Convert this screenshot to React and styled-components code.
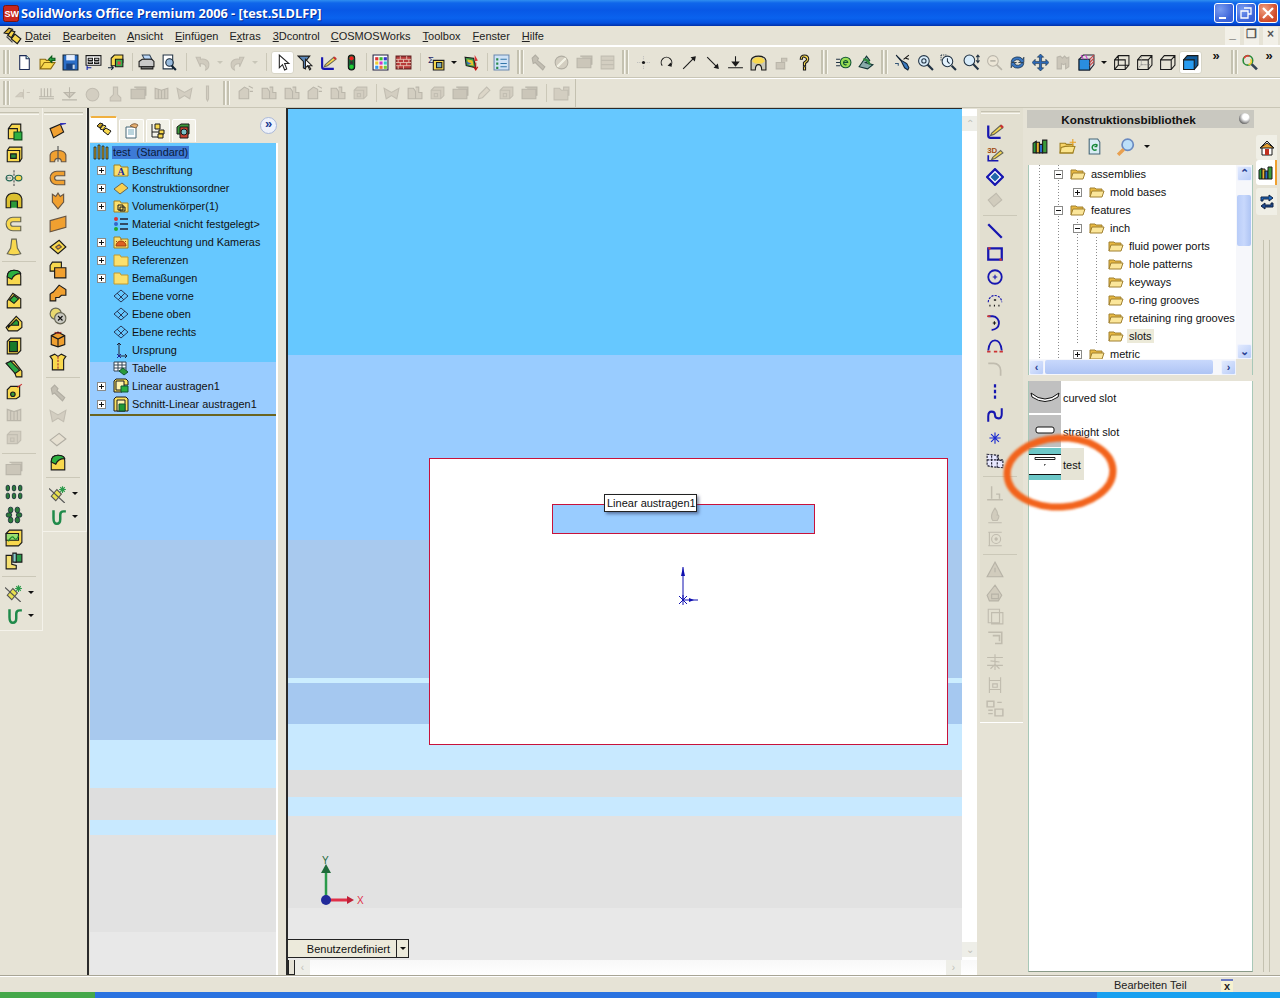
import React from 'react'
import styled, { createGlobalStyle } from 'styled-components'

const GlobalStyle = createGlobalStyle`
  html, body { margin: 0; padding: 0; background: #e6e3d6; }
  body { font-family: "Liberation Sans", Arial, sans-serif; font-size: 11px; color: #111; }
`

const BEIGE = '#e6e3d6'
const Y = '#f8d84e'
const O = '#f0a030'
const K = '#1a1a1a'
const B = '#1616b0'

const s = { stroke: K, strokeWidth: 1 }

/* 16x16 toolbar bitmaps redrawn by hand */
const icons = {
  logo: <g><path d="M1 5l4-4 3 1-3 4z" fill="#d8b030" {...s} /><path d="M4 7l3-4 3 1-3 5z" fill={Y} {...s} /><path d="M7 10l3-4 5 4-3 4z" fill={Y} {...s} /><path d="M3 8l5 5" stroke="#444" /></g>,
  new: <g><path d="M3.5 1.5h6l3 3v10h-9z" fill="#fff" stroke="#1c2a55" /><path d="M9.5 1.5v3h3" fill="#cfe" stroke="#1c2a55" /></g>,
  open: <g><path d="M1 14V5h5l1 1h5v2H5l-4 6h10l4-6H5" fill={Y} stroke="#8a6a10" /><path d="M9 5l3-3v2h3v2h-3v2z" fill="#2aa845" stroke="#0a5a1a" /></g>,
  save: <g><path d="M1 1h14v14H1z" fill="#2a6ec8" stroke="#123" /><path d="M4 1h8v5H4z" fill="#e8f0ff" /><path d="M4 9h8v6H4z" fill="#16407e" /><path d="M10 10h2v4h-2z" fill="#cde" /></g>,
  props: <g><path d="M1 1.5h14v9H1z" fill="#fff" {...s} /><path d="M3 4h4v2H3zM9 4h4v2H9zM3 7.5h4v1.500H3zM9 7.500h4v1.500H9z" fill="#fff" {...s} /><path d="M2 11v4M2 13h4" stroke="#12a" /></g>,
  cube3: <g><path d="M3 4l3-3h8v7l-3 3H3z" fill={Y} {...s} /><path d="M7 5h7v7H7z" fill="#3ab04a" {...s} /><path d="M9 7h3v3H9z" fill="#d44" /><path d="M0 13h5M3 11l2 2-2 2" stroke="#123" fill="none" /></g>,
  print: <g><path d="M4 1h7l2 4H6z" fill="#bcd8f8" stroke="#345" /><path d="M1 7l3-2h9l2 2v5H1z" fill="#c8c8c8" {...s} /><path d="M3 12h11v2H3z" fill="#888" {...s} /></g>,
  preview: <g><path d="M2 1h9v13H2z" fill="#fff" stroke="#234" /><circle cx="8" cy="8" r="3.500" fill="#9bd" stroke="#123" /><path d="M10 11l4 4" stroke="#123" strokeWidth="2" /></g>,
  undo: <g><path d="M2 3h4v2a6 5 0 0 1 8 5c0 2-1 4-3 5 1-3 0-6-5-6v3z" fill="#b0a860" stroke="#888" /></g>,
  redo: <g><path d="M14 3h-4v2a6 5 0 0 0-8 5c0 2 1 4 3 5-1-3 0-6 5-6v3z" fill="#b0a860" stroke="#888" /></g>,
  select: <path d="M5 1v12l3-3 2 5 2-1-2-5h4z" fill="#fff" stroke="#222" />,
  filter: <g><path d="M1 2h11L8 7v7l-2-1V7z" fill="#5a86b8" {...s} /><path d="M8 5v8l2-2 2 4 1-1-2-3h3z" fill="#fff" stroke="#222" /></g>,
  sketch: <g><path d="M2 3v9q0 2 2 2h9" fill="none" stroke={B} strokeWidth="2" /><path d="M5 10l8-7 2 2-8 6-3 1z" fill={Y} stroke="#665" /><path d="M13 3l2 2" stroke="#c33" strokeWidth="2" /></g>,
  sketch3d: <g><text x="1" y="7" fontSize="7" fontWeight="700" fontFamily="Liberation Sans" fill="#a04a10">3D</text><path d="M2 9v5h9" fill="none" stroke={B} strokeWidth="1.500" /><path d="M6 11l7-6 2 2-7 5-3 1z" fill={Y} stroke="#665" /></g>,
  light: <g><rect x="5" y="1" width="6" height="14" rx="3" fill="#163" stroke="#111" /><circle cx="8" cy="4" r="2" fill="#e22" /><circle cx="8" cy="8" r="1.500" fill="#333" /><circle cx="8" cy="12" r="2" fill="#2c3" /></g>,
  colors: <g><path d="M1 1h14v14H1z" fill="#fff" stroke="#224" /><path d="M3 3h3v3H3z" fill="#d33" /><path d="M7 3h3v3H7z" fill="#3b3" /><path d="M11 3h3v3h-3z" fill="#33c" /><path d="M3 7h3v3H3z" fill="#ec3" /><path d="M7 7h3v3H7z" fill="#c3c" /><path d="M11 7h3v3h-3z" fill="#3cc" /><path d="M3 11h3v3H3z" fill="#39e" /><path d="M7 11h3v3H7z" fill="#e73" /><path d="M11 11h3v3h-3z" fill="#7c3" /></g>,
  brick: <g><path d="M1 2h14v12H1z" fill="#b83a3a" stroke="#622" /><path d="M1 5h14M1 8h14M1 11h14M5 2v3M11 2v3M3 5v3M8 5v3M13 5v3M5 8v3M11 8v3M3 11v3M8 11v3" stroke="#e8c8b8" strokeWidth=".8" /></g>,
  sigma: <g><path d="M5 6h10v9H5z" fill={Y} {...s} /><path d="M8 8h5v5H8z" fill="#7ab" {...s} /><text x="0" y="8" fontSize="9" fill="#226" fontFamily="Liberation Sans">Σ</text></g>,
  rainbow: <g><path d="M2 3l8 1 2 9-9-2z" fill="#3a9a4a" {...s} /><path d="M4 5l5 1 1 5-5-1z" fill="#e8c030" /><path d="M11 1l3 5-3 1z" fill="#d33" /><path d="M3 7l5 2-3 1z" fill="#36c" /><path d="M12 8v6M10 12l2 3 2-3" stroke="#b11" fill="none" /></g>,
  list: <g><path d="M1 1h14v14H1z" fill="#cfe2f6" stroke="#6a8ab0" /><path d="M3 4h2v2H3zM3 8h2v2H3zM3 12h2v2H3z" fill="#2a8a4a" /><path d="M7 5h6M7 9h6M7 12h6" stroke="#37a" /></g>,
  wrench: <path d="M2 4l3-3 3 3-1 2 7 6-2 3-7-7-2 1z" fill="#888" stroke="#666" />,
  disc: <g><circle cx="8" cy="8" r="6" fill="#aaa" stroke="#666" /><path d="M4 12l8-8" stroke="#fff" strokeWidth="2" /></g>,
  stamp: <path d="M1 4h13v9H1zM4 2h11v8" fill="#999" stroke="#777" />,
  lines: <path d="M2 2h12v12H2zM2 6h12M2 10h12" fill="#aaa" stroke="#888" />,
  point: <g><circle cx="8" cy="8" r="1.500" fill={K} /><path d="M8 2v3M8 11v3M2 8h3M11 8h3" stroke="#bbb" strokeDasharray="1 1" /></g>,
  arcArrow: <g><path d="M4 11a5 5 0 1 1 8 0" fill="none" stroke={K} /><path d="M12 8l1 4-4-1z" fill={K} /></g>,
  arrowUp: <g><path d="M2 14L13 3" stroke={K} /><path d="M14 2l-1 5-4-4z" fill={K} /></g>,
  arrowDown: <g><path d="M3 3l10 10" stroke={K} /><path d="M14 14l-1-5-4 4z" fill={K} /></g>,
  ground: <g><path d="M8 2v9M1 13h14" stroke={K} /><path d="M4 7h8l-4 5z" fill={K} /></g>,
  dome: <g><path d="M1 15V6q1-4 7-4t7 4v9h-4q0-5-3-5t-3 5z" fill="#c8c8b8" {...s} /><path d="M2 7q1-4 6-4t6 4l-3 2H5z" fill={Y} /></g>,
  lock: <path d="M3 8h8v6H3zM8 8V4h5v3" fill="#999" stroke="#777" />,
  help: <g><path d="M4 5q0-4 4-4t4 4q0 2-3 4v2H7V8q3-2 3-3t-2-2-2 2z" fill={Y} {...s} /><path d="M7 12h2v3H7z" fill={Y} {...s} /></g>,
  eCircle: <g><path d="M1 5h4M1 8h4M1 11h4" stroke="#234" /><circle cx="10" cy="8" r="5" fill="#9d5" stroke="#153" /><path d="M8 8h4a2 2 0 1 0-1 2" stroke="#153" fill="none" /></g>,
  snake: <g><path d="M1 12L8 2l3 4-4 2 7 2-5 4z" fill="#8aa" stroke="#133" /><path d="M5 5q5 0 6 5" stroke="#2a8a3a" fill="none" strokeWidth="2" /></g>,
  tools: <g><path d="M2 1l5 6 3 6 3 2 1-2-2-4-5-3z" fill="#3a7ac0" stroke="#123" /><path d="M14 1L9 5M14 5l-3-1" stroke="#111" /><path d="M1 9h3v2" stroke="#357" fill="none" /></g>,
  zoomFit: <g><circle cx="6.500" cy="6.500" r="5" fill="#d8ecfa" stroke="#234" /><circle cx="6.500" cy="6.500" r="2" fill="none" stroke="#234" /><path d="M10 10l5 5" stroke="#234" strokeWidth="2" /></g>,
  zoomArea: <g><circle cx="7" cy="7" r="5" fill="#e4f2fc" stroke="#234" /><path d="M1 1h5M1 1v5" stroke="#234" strokeDasharray="1 1" /><path d="M7 4v3l2 2" stroke="#234" fill="none" /><path d="M11 11l4 4" stroke="#234" strokeWidth="2" /></g>,
  zoomUp: <g><circle cx="6" cy="6" r="5" fill="#d8ecfa" stroke="#234" /><path d="M9.500 9.500l5 5" stroke="#234" strokeWidth="2" /><path d="M14 1v7M12.500 3L14 1l1.500 2M12.500 6L14 8l1.500-2" stroke="#234" fill="none" /></g>,
  zoomSel: <g><circle cx="6.500" cy="6.500" r="5" fill="#ddd" stroke="#777" /><path d="M4 6.500h5M10 10l5 5" stroke="#777" strokeWidth="1.500" /></g>,
  rotate: <g><path d="M2 7a6 5 0 0 1 11-2l1-2v5h-5l2-1a4 4 0 0 0-7 1z" fill="#3a76c0" stroke="#123" strokeWidth=".6" /><path d="M14 9a6 5 0 0 1-11 2l-1 2V8h5l-2 1a4 4 0 0 0 7-1z" fill="#3a76c0" stroke="#123" strokeWidth=".6" /></g>,
  pan: <path d="M8 0l3 3H9v4h4V5l3 3-3 3V9H9v4h2l-3 3-3-3h2V9H3v2L0 8l3-3v2h4V3H5z" fill="#2a68b8" stroke="#123" strokeWidth=".5" />,
  camera: <path d="M2 14V3l3-1 2 2 2-2 2 2 2-1v9l-3 2V9l-2 1-2-1v5z" fill="#999" stroke="#777" />,
  viewCube: <g><path d="M1 5l4-4h10v9l-4 5H1z" fill="#ddd" stroke="#223" /><path d="M1 5h10v10H1z" fill="#2a8ee0" stroke="#123" /><path d="M11 5l4-4M11 8l4-4M11 11l4-4" stroke="#c44" /><path d="M3 1l2 4M7 1l2 4" stroke="#c4c" /></g>,
  wire: <path d="M1.500 5.500h10v9h-10zM1.500 5.500l3.500-4h10v9l-3.500 4M5 1.500v9h10M5 10.500l-3.500 4" fill="none" stroke={K} />,
  hidden: <g><path d="M1.500 5.500h10v9h-10zM1.500 5.500l3.500-4h10v9l-3.500 4M11.500 5.500l3.500-4" fill="none" stroke={K} /><path d="M5 3v7h8M5 10l-3 4" stroke="#888" strokeDasharray="1 1" fill="none" /></g>,
  hiddenRem: <path d="M1.500 5.500h10v9h-10zM1.500 5.500l3.500-4h10v9l-3.500 4M11.500 5.500l3.500-4" fill="none" stroke={K} />,
  shaded: <g><path d="M1.500 5.500l3.500-4h10v9l-3.500 4z" fill="#0f5a9a" {...s} /><path d="M1.500 5.500h10v9h-10z" fill="#2a9cf0" {...s} /></g>,
  search: <g><circle cx="6.500" cy="6" r="4.500" fill="none" stroke="#2a8a3a" strokeWidth="1.500" /><path d="M3 4a4 4 0 0 1 5-2" stroke="#e33" strokeWidth="1.500" fill="none" /><path d="M9 5a3 3 0 0 1-2 5" stroke="#ec3" strokeWidth="1.500" fill="none" /><path d="M10 9.500l5 5" stroke="#345" strokeWidth="2.500" /></g>,
  parallel: <g><path d="M1 11l4-4h2v4zM8 4v9M11 7h3" stroke="#999" fill="#aaa" /></g>,
  comb: <path d="M1 11h14M3 3v8M6 3v8M9 3v8M12 3v8M1 13h14" stroke="#777" fill="none" />,
  perp: <path d="M8 2v9M3 7h10l-5 5zM1 14h14" stroke="#777" fill="#aaa" />,
  blob: <circle cx="8" cy="9" r="6" fill="#aaa" stroke="#888" />,
  tall: <path d="M6 2h4v7l3 3v3H3v-3l3-3z" fill="#aaa" stroke="#888" />,
  ribs: <path d="M2 3l6 2 6-2v10H2zM5 4v9M8 5v8M11 4v9" fill="#aaa" stroke="#777" />,
  wings: <path d="M1 3l7 4 7-4-2 10-5-3-5 3z" fill="#aaa" stroke="#888" />,
  pin: <path d="M7 1h2v12l-1 2-1-2z" fill="#aaa" stroke="#888" />,
  planeA: <path d="M2 13V6l5-4 4 2v9zM11 1l4 2M12 6h3" fill="#aaa" stroke="#777" />,
  planeB: <path d="M2 13V3h5l2 3v7zM9 2h3v5h3v6H9" fill="#aaa" stroke="#777" />,
  pencil: <path d="M3 13l1-4 7-7 3 3-7 7z" fill="#bbb" stroke="#888" />,
  boxN: <path d="M2 13V5l3-3h9v8l-3 3zM2 5h9v8M5 8h3v3H5z" fill="#aaa" stroke="#888" />,
  folderOff: <path d="M1 14V3h5l2 2h6v9zM10 5V2h5v8" fill="#aaa" stroke="#888" />,
  boss: <g><path d="M3 5l3-4h8v8l-3 5H3z" fill={Y} {...s} /><path d="M3 5h8v9" fill="none" {...s} /><path d="M8 8h7v7H8z" fill="#2db040" stroke="#0a4a1a" /></g>,
  squareBox: <g><path d="M2 4l2-3h11v10l-2 3H2z" fill={Y} {...s} /><path d="M2 4h11v10" fill="none" {...s} /><path d="M5 7h5v4H5z" fill="#2a8a3a" {...s} /></g>,
  axis: <g><path d="M8 1v14M1 8h4" stroke="#555" strokeDasharray="2 1" /><ellipse cx="4" cy="8" rx="3" ry="2.500" fill="none" stroke="#265" /><ellipse cx="12" cy="8" rx="3" ry="2.500" fill={Y} stroke="#265" /></g>,
  arch: <g><path d="M1 14V6q1-5 7-5t7 5v8h-4V9H5v5z" fill="#dcc030" {...s} /><path d="M5 14V8h6v6" fill="#2a9a3a" {...s} /></g>,
  cee: <path d="M14 2H7a6 6 0 0 0 0 12h7v-4H7a2 2 0 0 1 0-4h7z" fill={Y} stroke="#665" />,
  bell: <path d="M6 1h4l1 8 3 5q-6 2-12 0l3-5z" fill={Y} stroke="#665" />,
  domeG: <g><path d="M2 15V8q0-6 6-6 6 0 6 5v8z" fill={Y} {...s} /><path d="M2 8q0-6 6-6 5 0 6 3-6 0-8 5z" fill="#2db040" {...s} /></g>,
  domeH: <g><path d="M2 15V9l5-7 7 5v8z" fill={Y} {...s} /><path d="M4 8l4-4 4 3-4 4z" fill="#2db040" {...s} /></g>,
  ribL: <g><path d="M1 12l9-10 5 5v5l-4 3H3z" fill={Y} {...s} /><path d="M3 12l7-7 2 2v3H3z" fill="#2a9a3a" {...s} /></g>,
  shell: <g><path d="M2 4l3-3h9v11l-3 3H2z" fill={Y} {...s} /><path d="M4 4h7v9H4z" fill="#1a7a2a" {...s} /></g>,
  chamfer: <g><path d="M5 1h3l7 9v5h-5z" fill={Y} {...s} /><path d="M1 3l4-2 8 8-4 3z" fill="#2aa845" {...s} /></g>,
  holeX: <g><path d="M2 6l3-3h8v9l-3 2H2z" fill={Y} {...s} /><circle cx="7" cy="10" r="2" fill="#3a9a3a" {...s} /><path d="M11 4l4-3" stroke="#c33" /></g>,
  pattern: <g fill="#2a7a3a" stroke="#123" strokeWidth=".7"><rect x="1" y="2" width="3" height="5" rx="1.500" /><rect x="6.500" y="2" width="3" height="5" rx="1.500" /><rect x="12" y="2" width="3" height="5" rx="1.500" /><rect x="1" y="9" width="3" height="5" rx="1.500" /><rect x="6.500" y="9" width="3" height="5" rx="1.500" /><rect x="12" y="9" width="3" height="5" rx="1.500" /></g>,
  circular: <g fill="#2a7a3a" stroke="#123" strokeWidth=".7"><rect x="3" y="1" width="4" height="5" rx="2" /><rect x="9" y="1" width="4" height="5" rx="2" /><rect x="1" y="6" width="5" height="4" rx="2" /><rect x="10" y="6" width="5" height="4" rx="2" /><rect x="3" y="10" width="4" height="5" rx="2" /><rect x="9" y="10" width="4" height="5" rx="2" /></g>,
  curveBox: <g><path d="M1 4l3-3h11v11l-3 3H1z" fill={Y} {...s} /><path d="M1 4h11v6H1z" fill="#9adf70" {...s} /><path d="M3 11q3-6 5-3t4-2" stroke="#1a8a2a" fill="none" /></g>,
  mirror: <g><path d="M1 3h5v8l4 1v3H1z" fill="#f5e070" {...s} /><path d="M9 2h6v7H9z" fill="#2a9a4a" {...s} /><path d="M7 1h3v8H7z" fill="#8cc" {...s} /></g>,
  refGeom: <g><path d="M2 10l5-6 4 4-5 6z" fill="#e8e050" stroke="#555" /><path d="M0 3l14 13" stroke="#555" /><path d="M12 1v6M9 4h6M10 2l4 4M14 2l-4 4" stroke="#2a9a4a" /></g>,
  curve: <path d="M4 2v7q0 5 3 5t3-4V6q0-3 3-3h2" fill="none" stroke="#1f8a4a" strokeWidth="2.200" />,
  sweepO: <g><path d="M1 5l9-4 3 7-9 5z" fill={O} {...s} /><path d="M10 1l5-1" stroke="#33b" strokeWidth="2" /></g>,
  archO: <g><path d="M1 14V8q1-4 7-4t7 4v6h-4q0-3-3-3t-3 3z" fill={O} stroke="#654" /><path d="M8 0v14" stroke="#555" /></g>,
  ceeO: <path d="M14 2H7a6 6 0 0 0 0 12h7v-4H7a2 2 0 0 1 0-4h7z" fill={O} stroke="#654" />,
  arrowO: <path d="M3 2l3 2 2-3 2 3 3-2v7l-5 6-5-6z" fill={O} stroke="#654" />,
  planeO: <path d="M1 5l14-4v10L1 15z" fill={O} stroke="#654" />,
  diaO: <g><path d="M1 8l8-6 6 6-7 6z" fill={Y} {...s} /><path d="M6 8l3-2 2 2-3 2z" fill={O} stroke="#654" /></g>,
  cubesO: <g><path d="M1 4l2-3h8v8H1z" fill={Y} {...s} /><path d="M5 6h10v9H5z" fill={O} {...s} /></g>,
  elbowO: <path d="M1 15V9q1-1 3-2l5-6 6 4v5h-4l-2 2H6v3z" fill={O} {...s} />,
  ballX: <g><circle cx="6" cy="6" r="5" fill="#e8d870" stroke="#665" /><circle cx="10" cy="10" r="5" fill="#c8c8c0" stroke="#665" /><path d="M8 8l4 4M12 8l-4 4" stroke="#111" /></g>,
  boxO: <g><path d="M2 5l6-3 6 3v8l-6 2-6-2z" fill={O} {...s} /><path d="M2 5l6 3 6-3M8 8v7" fill="none" {...s} /><path d="M5 2l3 1 3-1" stroke="#a33" /></g>,
  shirt: <g><path d="M1 3l4-2 3 2 3-2 4 2-2 3v9H3V6z" fill={Y} {...s} /><path d="M8 3v12" stroke="#a33" strokeDasharray="2 1" /></g>,
  dim: <g><path d="M1 8l7-7 7 7-7 7z" fill="#fff" stroke={B} strokeWidth="2" /><path d="M4 8l4-4 4 4-4 4z" fill="#26a" /></g>,
  dimOff: <path d="M2 8l7-6 5 6-7 6z" fill="#aaa" stroke="#888" />,
  line: <path d="M2 2l12 12" stroke={B} strokeWidth="2" />,
  rect: <g><path d="M2 3h12v10H2z" fill="none" stroke={B} strokeWidth="2" /><path d="M2 3h2M12 13h2" stroke="#c33" strokeWidth="2" /></g>,
  circle: <g><circle cx="8" cy="8" r="6" fill="none" stroke={B} strokeWidth="1.600" /><path d="M6 8h4M8 6v4" stroke={B} /></g>,
  arcDots: <g><path d="M2 10a6 6 0 0 1 12 0" fill="none" stroke={B} strokeDasharray="2 1" /><path d="M3 13h1M7 13h1M11 13h1M7 8h2" stroke={K} strokeWidth="1.500" /></g>,
  arc: <g><path d="M2 2h4a6 6 0 1 1-1 12" fill="none" stroke={B} strokeWidth="1.600" /><path d="M6 8h3M7.500 6.500v3" stroke={K} /><path d="M1 2h3" stroke="#c33" strokeWidth="1.500" /></g>,
  tan: <g><path d="M2 12q1-9 6-9t6 9" fill="none" stroke={B} strokeWidth="1.600" /><path d="M1 13h3M7 13h3M12 13h3" stroke="#c33" strokeWidth="1.500" /></g>,
  arcOff: <path d="M2 3h5a6 6 0 0 1 6 6v5" fill="none" stroke="#888" strokeWidth="1.500" />,
  center: <path d="M8 1v14" stroke={B} strokeWidth="2" strokeDasharray="3 2" />,
  spline: <path d="M2 14V9q0-4 3-4t3 3 3 3 3-4V2" fill="none" stroke={B} strokeWidth="1.800" />,
  star: <path d="M8 3v10M3 8h10M4.500 4.500l7 7M11.500 4.500l-7 7" stroke="#1a2ad0" />,
  dashGrid: <g fill="none" stroke="#223" strokeDasharray="2 1"><path d="M1 2l10 1v4l4 1v6l-11-1-3-1z" fill="#e8e8ff" /><path d="M5 3v10M10 3v11M1 7h14" /></g>,
  perpOff: <path d="M5 2v11M1 14h14M9 9h3v4" fill="none" stroke="#888" strokeWidth="1.300" />,
  fireOff: <path d="M8 1q3 4 2 6 3 0 0 5H6q-3-4 2-11zM2 14h12" fill="#aaa" stroke="#888" />,
  ringOff: <g fill="none" stroke="#888"><path d="M2 2h12M2 14h12M3 2v12" /><circle cx="9" cy="8" r="4" /><circle cx="9" cy="8" r="1" fill="#888" /></g>,
  warnOff: <path d="M8 1l7 13H1zM8 6v4" fill="#aaa" stroke="#777" />,
  warnBox: <path d="M8 1l6 9-3 5H3l-2-5zM5 9h6v4H5z" fill="#aaa" stroke="#777" />,
  offsetOff: <path d="M2 2h10v12H2zM5 5h10v10H5z" fill="none" stroke="#888" />,
  trimOff: <path d="M2 2h12v10H8M6 5h6v5" fill="none" stroke="#888" strokeWidth="1.400" />,
  gearOff: <path d="M1 4h14M1 11h14M8 1v14M4 7l8 1M4 14l4-4 4 4" fill="none" stroke="#888" />,
  tickOff: <path d="M3 1v14M13 1v14M3 4h10M3 12h10M6 7h4v3H6z" fill="none" stroke="#888" />,
  blockOff: <path d="M1 2h6v5H1zM8 9h7v6H8zM2 10h4M2 13h4M10 3h4" fill="none" stroke="#888" strokeWidth="1.300" />,
  book: <g><path d="M1 5l3-2v11H1z" fill="#2a9a3a" {...s} /><path d="M4 4h3v10H4z" fill="#e8b030" {...s} /><path d="M7 6h3v8H7z" fill="#2a6ac8" {...s} /><path d="M10 2h4v12h-4z" fill="#3a9a3a" {...s} /></g>,
  folderStar: <g><path d="M1 14V5h5l1 1h6v8z" fill="#f8d468" stroke="#a08020" /><path d="M2 9q5-2 13-1l-2 6H1z" fill="#fbe48c" stroke="#a08020" /><path d="M13 1v6M10 4h6" stroke="#e8a020" /></g>,
  sheet: <g><path d="M3 1h8l2 3v11H3z" fill="#d8ecf4" stroke="#467" /><path d="M6 10a3 3 0 0 1 5-3M10 6v2h-2M10 11a3 3 0 0 1-4-1" stroke="#1a8a3a" fill="none" strokeWidth="1.300" /></g>,
  glass: <g><circle cx="9.500" cy="6" r="5" fill="#bcdff8" stroke="#6a8ac0" strokeWidth="1.500" /><path d="M6 10l-5 5" stroke="#e8a050" strokeWidth="3" /></g>,
  home: <g><path d="M1 8l7-7 7 7M3 7v8h10V7" fill="#fff" {...s} /><path d="M6 9h4v6H6z" fill="#c03020" /><path d="M8 3L1 8h14z" fill="#e8a030" {...s} /></g>,
  arrows: <g><path d="M2 7V3h8V1l4 3-4 3V5H4v2z" fill="#1f6ac0" stroke="#124" /><path d="M14 9v4H6v2l-4-3 4-3v2h6V9z" fill="#1f4a90" stroke="#124" /></g>,
  folderOpen: <g><path d="M1 13V4h5l1 1h6v3" fill="#e8b840" stroke="#a08030" /><path d="M1 13l2-6h12l-2 6z" fill="#fbe69a" stroke="#a08030" /></g>,
  folderTree: <g><path d="M1 14V3h6l1 2h7v9z" fill="#fbe06c" stroke="#c09a30" /></g>,
  folderA: <g><path d="M1 14V3h6l1 2h7v9z" fill="#fbe06c" stroke="#a08020" /><text x="4.500" y="13" fontSize="10" fontWeight="700" fontFamily="Liberation Serif" fill="#1a2a9a">A</text></g>,
  diamondFolder: <path d="M1 9l8-6 6 5-8 6z" fill="#f8d050" stroke="#665" />,
  folderBody: <g><path d="M1 14V3h6l1 2h7v9z" fill="#fbe06c" stroke="#a08020" /><path d="M5 7h5v5H5zM7 9h5v4H7z" fill="none" {...s} /></g>,
  material: <g><circle cx="3" cy="3" r="2" fill="#d33" /><circle cx="3" cy="8" r="2" fill="#36c" /><circle cx="3" cy="13" r="2" fill="#2a3" /><path d="M7 3h8M7 8h8M7 13h8" stroke="#223" strokeWidth="1.500" /></g>,
  folderLight: <g><path d="M1 14V3h6l1 2h7v9z" fill="#fbe06c" stroke="#a08020" /><path d="M3 12a5 5 0 0 1 10 0zM8 5v1M3 7l1 1M13 7l-1 1" fill="#e06020" stroke="#a04010" /></g>,
  plane: <path d="M1 8l7-6 7 6-7 6zM4 5l7 7M12 5l-7 7" fill="none" stroke="#2a3a5a" />,
  origin: <g><path d="M6 1v13M6 14h8" stroke="#223" /><path d="M4 3l2-2 2 2M12 12l2 2-2 2" fill="none" stroke="#223" /><path d="M4 12l4 4M8 12l-4 4" stroke="#229" /></g>,
  table: <g><path d="M1 2h12v9H1z" fill="#fff" stroke="#345" /><path d="M1 5h12M1 8h12M5 2v9M9 2v9" stroke="#345" /><path d="M6 11l4-3 5 4-4 3z" fill="#2a9a3a" stroke="#153" /></g>,
  extrudeT: <g><path d="M1 14V3l2-2h10l2 2v4H9v7z" fill="#f8e060" {...s} /><path d="M3 3h8v9H3z" fill="#fff3b0" {...s} /><path d="M8 8h7v6H8z" fill="#2ab040" stroke="#153" /></g>,
  cutT: <g><path d="M1 14V3l2-2h10l2 2v12H1z" fill="#f8e060" {...s} /><path d="M4 4h8v11H4z" fill="#fff3b0" {...s} /><path d="M6 8h6v7H6z" fill="#1f9a35" stroke="#153" /></g>,
  bars: <path d="M1 3v12h2V3zM5 1v14h2V1zM9 2v13h2V2zM13 3v12h2V3z" fill="#c8a020" stroke="#123" strokeWidth=".8" />,
  featTab: <g><path d="M1 4l3-3 3 1-3 4z" fill="#c8a020" {...s} /><path d="M4 7l3-4 3 1-3 4z" fill={Y} {...s} /><path d="M7 9l3-3 5 3-3 4z" fill={Y} {...s} /></g>,
  propTab: <g><path d="M2 4h10v11H2z" fill="#fff" stroke="#467" /><path d="M4 7h6M4 9h6M4 11h6" stroke="#7ab" /><path d="M6 3q4-4 8-1l-2 3-3-1z" fill="#e8b070" stroke="#864" /></g>,
  confTab: <g><path d="M5 1h5v5H5z" fill={Y} {...s} /><path d="M9 7h5v4H9z" fill={Y} {...s} /><path d="M8 11h5v4H8z" fill={Y} {...s} /><path d="M2 1v13h6M2 9h7" stroke={K} fill="none" /></g>,
  dimTab: <g><path d="M1 4l4-3h8v10H1z" fill="#3a9a3a" {...s} /><path d="M4 4h8v11H4z" fill="#c84030" {...s} /><circle cx="8" cy="9" r="3" fill="#7ac0c8" {...s} /></g>,
}

const Svg = styled.svg`
  display: block;
  flex: none;
  width: ${p => p.$size || 16}px;
  height: ${p => p.$size || 16}px;
  ${p => p.$off && 'filter: grayscale(1) sepia(.3) opacity(.45);'}
`

const Glyph = ({ name, off, size }) => (
  <Svg viewBox="0 0 16 16" $off={off} $size={size}>{icons[name]}</Svg>
)

const Page = styled.div`
  width: 1280px;
  height: 998px;
  overflow: hidden;
  display: flex;
  flex-direction: column;
  background: ${BEIGE};
  position: relative;
`

const TitleBar = styled.div`
  height: 26px;
  flex: none;
  display: flex;
  align-items: center;
  padding: 0 2px 0 3px;
  background: linear-gradient(180deg, #2f8ef0 0, #0f66ea 3px, #0858e6 10px, #0a62ee 18px, #0450de 23px, #0030a8 26px);
`

const AppLogo = styled.svg`
  width: 16px;
  height: 17px;
  margin-right: 2px;
`

const TitleText = styled.div`
  flex: 1;
  color: #fff;
  font: 700 12.75px "Open Sans", "Liberation Sans", sans-serif;
  text-shadow: 1px 1px 0 #0a2a90;
  white-space: nowrap;
`

const WinBtn = styled.div`
  width: 20px;
  height: 20px;
  margin-left: 2px;
  border: 1px solid #fff;
  border-radius: 3px;
  box-sizing: border-box;
  display: flex;
  align-items: center;
  justify-content: center;
  background: ${p => p.$red ? 'radial-gradient(circle at 30% 30%, #f0a080, #d04a28 70%)' : 'radial-gradient(circle at 30% 30%, #7a9cf0, #3a62d8 70%)'};
`

const MenuBar = styled.div`
  height: 20px;
  flex: none;
  box-sizing: border-box;
  display: flex;
  align-items: center;
  padding: 1px 0 0 3px;
  border-bottom: 1px solid #fff;
`

const MenuLogo = styled.div`
  width: 19px;
  margin: 0 3px 0 0;
`

const MenuItem = styled.span`
  margin-right: ${p => p.$gap}px;
  font-size: 11px;
  color: #222;
  u { text-decoration: underline; }
`

const MdiBtns = styled.div`
  margin-left: auto;
  display: flex;
  gap: 4px;
  padding-right: 2px;
  height: 18px;
`

const MdiBtn = styled.div`
  width: 15px;
  background: #f2f0e8;
  color: #555;
  font-size: 12px;
  font-weight: 700;
  line-height: 15px;
  text-align: center;
`

const ToolRow = styled.div`
  height: ${p => p.$h}px;
  flex: none;
  display: flex;
  align-items: center;
  box-sizing: border-box;
  border-top: 1px solid #fff;
  border-bottom: 1px solid #c9c6b6;
`

const Slot = styled.div`
  width: 23px;
  height: 23px;
  flex: none;
  display: flex;
  align-items: center;
  justify-content: center;
  box-sizing: border-box;
  ${p => p.$on && 'background: #fff; border: 1px solid #d8d6c8; border-radius: 3px;'}
`

const DropSlot = styled.div`
  width: 12px;
  height: 23px;
  flex: none;
  display: flex;
  align-items: center;
  justify-content: center;
`

const Caret = styled.span`
  width: 0;
  height: 0;
  border-left: 3px solid transparent;
  border-right: 3px solid transparent;
  border-top: 3px solid ${p => p.$off ? '#c8c6b8' : '#111'};
`

const ToolSep = styled.div`
  width: ${p => p.$w}px;
  height: 22px;
  flex: none;
  position: relative;
  &::after {
    content: '';
    position: absolute;
    left: 50%;
    top: 2px;
    bottom: 2px;
    width: 1px;
    background: #cbc8b8;
  }
`

const Grip = styled.div`
  width: ${p => p.$w}px;
  height: 24px;
  flex: none;
  display: flex;
  justify-content: center;
  gap: 1px;
  &::before, &::after {
    content: '';
    width: 2px;
    background: #c4c1b0;
    border-right: 1px solid #f8f7f0;
  }
`

const Chevrons = styled.div`
  width: ${p => p.$w}px;
  flex: none;
  align-self: flex-start;
  padding-top: 3px;
  text-align: center;
  font-size: 13px;
  font-weight: 700;
  line-height: 12px;
`

const RowEnd = styled.div`
  width: 1px;
  height: 100%;
  margin-left: 2px;
  background: #c4c1b0;
`

/* tokens: "name", "-name" greyed, "*name" pressed, "name+" with drop arrow, number = separator, "g13" = grip, ">>16" = overflow */
const ToolItems = ({ items }) => items.map((t, i) => {
  if (typeof t === 'number') return <ToolSep key={i} $w={t} />
  if (/^g\d/.test(t)) return <Grip key={i} $w={+t.slice(1)} />
  if (t.startsWith('>>')) return <Chevrons key={i} $w={+t.slice(2)}>»</Chevrons>
  const off = t.startsWith('-')
  const on = t.startsWith('*')
  const drop = t.endsWith('+')
  const name = t.replace(/^[-*]/, '').replace(/\+$/, '')
  return (
    <React.Fragment key={i}>
      <Slot $on={on}><Glyph name={name} off={off} size={17} /></Slot>
      {drop && <DropSlot><Caret $off={off} /></DropSlot>}
    </React.Fragment>
  )
})

const row1 = ['g13', 'new', 'open', 'save', 'props', 'cube3', 7, 'print', 'preview', 10, '-undo+', '-redo+', 10,
  '*select', 'filter', 'sketch', 'light', 6, 'colors', 'brick', 10, 'sigma+', 'rainbow', 7, 'list', 'g14',
  '-wrench', '-disc', '-stamp', '-lines', 'g13', 'point', 'arcArrow', 'arrowUp', 'arrowDown', 'ground', 'dome', '-lock', 'help', 'g16',
  'eCircle', 'snake', 'g13', 'tools', 'zoomFit', 'zoomArea', 'zoomUp', '-zoomSel', 'rotate', 'pan', '-camera', 'viewCube+',
  'wire', 'hidden', 'hiddenRem', '*shaded', '>>28', 'g8', 'search', '>>16']

const row2 = ['g12', '-parallel', '-comb', '-perp', '-blob', '-tall', '-stamp', '-ribs', '-wings', '-pin', 'g15',
  '-planeA', '-planeB', '-planeB', '-planeA', '-planeB', '-boxN', 8, '-wings', '-planeB', '-boxN', '-stamp', '-pencil', '-boxN', '-stamp', 9, '-folderOff']

const Body = styled.div`
  flex: 1;
  min-height: 0;
  display: flex;
`

const Strips = styled.div`
  width: 87px;
  flex: none;
  display: flex;
  align-items: flex-start;
`

const Strip = styled.div`
  width: ${p => p.$w}px;
  flex: none;
  box-sizing: border-box;
  padding: 4px 0 3px ${p => p.$pad}px;
  border-bottom: 1px solid #f4f2ea;
  border-right: 1px solid #f4f2ea;
  display: flex;
  flex-direction: column;
`

const StripGrip = styled.div`
  height: 3px;
  box-sizing: border-box;
  margin: 0 3px 5px -2px;
  border-top: 1px solid #c4c1b0;
  border-bottom: 1px solid #f8f7f0;
`

const StripSep = styled.div`
  height: ${p => p.$h}px;
  position: relative;
  &::after {
    content: '';
    position: absolute;
    left: 0;
    right: 6px;
    top: 45%;
    height: 1px;
    background: #cbc8b8;
  }
`

const StripRow = styled.div`
  display: flex;
`

const StripItems = ({ items }) => items.map((t, i) => {
  if (typeof t === 'number') return <StripSep key={i} $h={t} />
  const off = t.startsWith('-')
  const drop = t.endsWith('+')
  const name = t.replace(/^-/, '').replace(/\+$/, '')
  return (
    <StripRow key={i}>
      <Slot><Glyph name={name} off={off} size={18} /></Slot>
      {drop && <DropSlot><Caret /></DropSlot>}
    </StripRow>
  )
})

const strip1 = ['boss', 'squareBox', 'axis', 'arch', 'cee', 'bell', 7, 'domeG', 'domeH', 'ribL', 'shell', 'chamfer', 'holeX', '-ribs', '-boxN', 8,
  '-stamp', 'pattern', 'circular', 'curveBox', 'mirror', 9, 'refGeom+', 'curve+']
const strip2 = ['sweepO', 'archO', 'ceeO', 'arrowO', 'planeO', 'diaO', 'cubesO', 'elbowO', 'ballX', 'boxO', 'shirt', 8, '-wrench', '-wings', '-diamondFolder', 'domeG', 9, 'refGeom+', 'curve+']
const strip3 = ['sketch', 'sketch3d', 'dim', '-dimOff', 8, 'line', 'rect', 'circle', 'arcDots', 'arc', 'tan', '-arcOff', 'center', 'spline', 'star', 'dashGrid', 9,
  '-perpOff', '-fireOff', '-ringOff', 8, '-warnOff', '-warnBox', '-offsetOff', '-trimOff', '-gearOff', '-tickOff', '-blockOff']

const TreeDock = styled.div`
  width: 199px;
  flex: none;
  box-sizing: border-box;
  border-left: 2px solid #2a2a2a;
  padding: 0 8px 0 1px;
  display: flex;
  flex-direction: column;
  height: 867px;
`

const TabStrip = styled.div`
  height: 35px;
  flex: none;
  display: flex;
  align-items: flex-end;
  gap: 2px;
  padding-bottom: 1px;
  box-sizing: border-box;
  position: relative;
`

const PanelTab = styled.div`
  width: ${p => p.$w}px;
  height: ${p => p.$on ? 26 : 23}px;
  box-sizing: border-box;
  display: flex;
  align-items: center;
  justify-content: center;
  background: ${p => p.$on ? '#fff' : '#f2f1e8'};
  border: 1px solid #fff;
  border-bottom: 0;
  ${p => p.$on && 'border-top: 2px solid #f0b040;'}
  border-radius: 2px 2px 0 0;
`

const MoreBtn = styled.div`
  margin-left: auto;
  margin-right: 1px;
  align-self: center;
  width: 15px;
  height: 15px;
  border-radius: 50%;
  border: 1px solid #aab8d8;
  background: #eef2fb;
  color: #1a3a90;
  font-weight: 700;
  font-size: 13px;
  line-height: 12px;
  text-align: center;
`

const bands = (stops, base) => {
  const parts = stops.map(([from, to, c]) => `${c} ${from - base}px ${to - base}px`)
  return `linear-gradient(180deg, ${parts.join(', ')})`
}

const treeBands = bands([
  [143, 362, '#66c8ff'], [362, 540, '#99ccff'], [540, 740, '#a8c9ee'], [740, 788, '#c8e9ff'],
  [788, 820, '#dedede'], [820, 835, '#c8e9ff'], [835, 932, '#e2e2e2'], [932, 975, '#e8e8e8'],
], 143)

const viewBands = bands([
  [108, 355, '#66c8ff'], [355, 540, '#99ccff'], [540, 678, '#a8c9ee'], [678, 683, '#cceeff'], [683, 724, '#a5c8f0'],
  [724, 770, '#c8e9ff'], [770, 797, '#dedede'], [797, 816, '#c8e9ff'], [816, 908, '#e2e2e2'], [908, 960, '#e8e8e8'],
], 108)

const FeatureTree = styled.div`
  flex: 1;
  background: ${treeBands};
  border-right: 2px solid #fff;
`

const TreeList = styled.div`
  border-bottom: 2px solid #6a6420;
  padding-bottom: 1px;
`

const FeatureRow = styled.div`
  height: 18px;
  display: flex;
  align-items: center;
  padding-left: 7px;
  white-space: nowrap;
  font-size: 10.9px;
`

const Expander = styled.span`
  width: 9px;
  height: 9px;
  box-sizing: border-box;
  flex: none;
  border: 1px solid #8a8a88;
  background: #fff;
  position: relative;
  visibility: ${p => p.$none ? 'hidden' : 'visible'};
  &::before {
    content: '';
    position: absolute;
    left: 1px;
    right: 1px;
    top: 3px;
    height: 1px;
    background: #111;
  }
  ${p => !p.$minus && `&::after {
    content: '';
    position: absolute;
    top: 1px;
    bottom: 1px;
    left: 3px;
    width: 1px;
    background: #111;
  }`}
`

const FeatureIcon = styled.span`
  width: 16px;
  margin: 0 3px 0 7px;
  flex: none;
`

const RootIcon = styled.span`
  width: 17px;
  flex: none;
  margin-right: 2px;
  margin-left: -4px;
`

const Selected = styled.span`
  background: #3d7ad6;
  color: #0c1a3a;
  padding: 0 1px;
  line-height: 13px;
`

const features = [
  ['folderA', 'Beschriftung', 1], ['diamondFolder', 'Konstruktionsordner', 1], ['folderBody', 'Volumenkörper(1)', 1],
  ['material', 'Material <nicht festgelegt>', 0], ['folderLight', 'Beleuchtung und Kameras', 1], ['folderTree', 'Referenzen', 1],
  ['folderTree', 'Bemaßungen', 1], ['plane', 'Ebene vorne', 0], ['plane', 'Ebene oben', 0], ['plane', 'Ebene rechts', 0],
  ['origin', 'Ursprung', 0], ['table', 'Tabelle', 0], ['extrudeT', 'Linear austragen1', 1], ['cutT', 'Schnitt-Linear austragen1', 1],
]

const Graphics = styled.div`
  width: 691px;
  flex: none;
  box-sizing: border-box;
  border-left: 2px solid #2a2a2a;
  display: flex;
  flex-direction: column;
`

const ViewRow = styled.div`
  flex: 1;
  display: flex;
  min-height: 0;
`

const Canvas = styled.div`
  width: 674px;
  flex: none;
  position: relative;
  background: ${viewBands};
  box-shadow: inset 0 1px 0 #2a2a2a;
`

const VScroll = styled.div`
  flex: 1;
  background: #fff;
  display: flex;
  flex-direction: column;
  justify-content: space-between;
  padding: 7px 0 3px;
  border-top: 1px solid #e6e3d6;
`

const FaintBtn = styled.div`
  width: 15px;
  height: 15px;
  background: #eeeee8;
  color: #c0c0b8;
  font-size: 10px;
  line-height: 15px;
  text-align: center;
`

const HScroll = styled.div`
  height: 15px;
  flex: none;
  background: linear-gradient(180deg, #f8f8f8, #fff);
  display: flex;
  align-items: center;
  padding: 0 16px 0 0;
`

const HThumb = styled.div`
  width: 7px;
  height: 15px;
  box-sizing: border-box;
  border: 1px solid #222;
  border-top: 0;
  background: ${BEIGE};
`

const HFill = styled.div`
  flex: 1;
`

const Part = styled.div`
  position: absolute;
  left: ${p => p.$x}px;
  top: ${p => p.$y}px;
  width: ${p => p.$w}px;
  height: ${p => p.$h}px;
  box-sizing: border-box;
  border: 1px solid #c8123a;
  background: ${p => p.$fill};
`

const Tip = styled.div`
  position: absolute;
  left: 316px;
  top: 386px;
  width: 93px;
  height: 18px;
  box-sizing: border-box;
  background: #fff;
  border: 1px solid #222;
  box-shadow: 2px 2px 3px rgba(40, 50, 90, .55);
  font-size: 11px;
  line-height: 16px;
  padding-left: 2px;
  white-space: nowrap;
  color: #111;
`

const Marker = styled.svg`
  position: absolute;
  left: ${p => p.$x}px;
  top: ${p => p.$y}px;
  overflow: visible;
`

const ViewTab = styled.div`
  position: absolute;
  left: 0;
  bottom: 2px;
  width: 121px;
  height: 19px;
  box-sizing: border-box;
  display: flex;
  background: #eceadb;
  border: 1px solid #222;
  border-left: 0;
  font-size: 11px;
`

const ViewTabLabel = styled.div`
  flex: 1;
  line-height: 18px;
  text-align: right;
  padding-right: 6px;
  border-right: 1px solid #222;
`

const ViewTabDrop = styled.div`
  width: 11px;
  display: flex;
  align-items: center;
  justify-content: center;
`

const SketchStrip = styled.div`
  width: 50px;
  flex: none;
  padding-left: 3px;
  box-sizing: border-box;
`

const SketchInner = styled.div`
  width: 43px;
  box-sizing: border-box;
  padding: 3px 0 3px 3px;
  border-bottom: 1px solid #fff;
  background: #e2dfd0;
  display: flex;
  flex-direction: column;
`

const Library = styled.div`
  width: 227px;
  flex: none;
  box-sizing: border-box;
  display: flex;
  flex-direction: column;
  padding: 2px 0 3px;
`

const LibTitle = styled.div`
  height: 18px;
  flex: none;
  background: #c9c8c0;
  display: flex;
  align-items: center;
  justify-content: center;
  padding-right: 24px;
  position: relative;
  font-weight: 700;
  font-size: 11.7px;
  color: #111;
`

const Pin = styled.span`
  position: absolute;
  right: 4px;
  top: 3px;
  width: 11px;
  height: 11px;
  border-radius: 50%;
  background: radial-gradient(circle at 60% 35%, #fff 30%, #777 70%, #111);
`

const LibTools = styled.div`
  height: 37px;
  flex: none;
  display: flex;
  align-items: center;
  padding-left: 2px;
  gap: 4px;
`

const LibToolSpace = styled.div`
  width: ${p => p.$w}px;
  flex: none;
`

const TreeBox = styled.div`
  height: 210px;
  flex: none;
  box-sizing: border-box;
  margin: 0 1px;
  background: #fff;
  border-left: 1px solid #a8c8b8;
  border-right: 1px solid #a8c8b8;
  display: grid;
  grid-template-columns: 1fr 16px;
  grid-template-rows: 1fr 16px;
  overflow: hidden;
`

const LibRows = styled.div`
  overflow: hidden;
  min-width: 0;
`

const LibRow = styled.div`
  height: 18px;
  display: flex;
  align-items: center;
  padding-left: ${p => p.$pad}px;
  white-space: nowrap;
  font-size: 11px;
  background-repeat: no-repeat;
  background-size: 1px 100%;
  background-image: ${p => p.$guides.map(() => 'repeating-linear-gradient(180deg, #8a8a8a 0 1px, transparent 1px 3px)').join(',')};
  background-position: ${p => p.$guides.map(x => `${x}px 0`).join(',')};
`

const LibLabel = styled.span`
  margin-left: 3px;
  padding: 1px 2px;
  ${p => p.$on && 'background: #ecead9;'}
`

const LibFolder = styled.span`
  margin-left: ${p => p.$gap}px;
  flex: none;
`

const VBar = styled.div`
  background: #f6f7fb;
  display: flex;
  flex-direction: column;
  align-items: center;
  padding-top: 1px;
`

const ArrowBtn = styled.div`
  width: 15px;
  height: 15px;
  flex: none;
  border-radius: 2px;
  border: 1px solid #eef2fe;
  box-sizing: border-box;
  background: linear-gradient(135deg, #e2eafe, #b8ccf8);
  color: #2a3e90;
  font-size: 11px;
  font-weight: 700;
  line-height: 12px;
  text-align: center;
`

const VThumb = styled.div`
  width: 14px;
  height: 51px;
  margin-top: 14px;
  flex: none;
  background: linear-gradient(90deg, #b8ccf8, #c8d8fc, #aec4f4);
  border-radius: 2px;
`

const VGap = styled.div`
  flex: 1;
`

const HBar = styled.div`
  display: flex;
  align-items: center;
  background: #f6f7fb;
  grid-column: 1;
`

const HBarThumb = styled.div`
  flex: 1;
  height: 14px;
  margin: 0 8px 0 1px;
  background: linear-gradient(180deg, #c8d8fc, #aec4f4);
  border-radius: 2px;
`

const Corner = styled.div`
  background: ${BEIGE};
`

const BandGap = styled.div`
  height: 6px;
  flex: none;
`

const ResultBox = styled.div`
  flex: 1;
  margin: 0 1px;
  background: #fff;
  border: 1px solid #a8c8b8;
  border-top: 0;
  border-bottom-color: #8a9a88;
  box-sizing: border-box;
`

const ResultRow = styled.div`
  height: 33.5px;
  display: flex;
  align-items: flex-start;
`

const Thumb = styled.div`
  width: 32px;
  height: 32px;
  flex: none;
  background: ${p => p.$active ? 'linear-gradient(180deg, #6cc7c7 0 6px, #111 6px 7px, #fff 7px 26px, #111 26px 27px, #6cc7c7 27px)' : '#c0c0c0'};
`

const ThumbSvg = styled.svg`
  display: block;
  width: 32px;
  height: 32px;
`

const ResultLabel = styled.div`
  height: 32px;
  line-height: 34px;
  padding: 0 3px 0 2px;
  font-size: 11px;
  ${p => p.$on && 'background: #e6e4d6;'}
`

const SideTabs = styled.div`
  flex: 1;
  padding: 27px 0 3px 2px;
  display: flex;
  flex-direction: column;
`

const SideTab = styled.div`
  width: 21px;
  height: ${p => p.$h}px;
  margin-bottom: ${p => p.$mb}px;
  flex: none;
  display: flex;
  align-items: center;
  justify-content: center;
  box-sizing: border-box;
  background: ${p => p.$on ? '#fff' : '#f0efe6'};
  border-radius: 3px 0 0 3px;
  ${p => p.$on && 'border-right: 2px solid #f0a030;'}
`

const SideRail = styled.div`
  flex: 1;
  margin: 25px 0 0 7px;
  width: 5px;
  border-left: 1px solid #c4c1b0;
  border-right: 1px solid #c4c1b0;
`

const StatusBar = styled.div`
  height: 17px;
  flex: none;
  box-sizing: border-box;
  display: flex;
  align-items: center;
  justify-content: flex-end;
  padding: 2px 47px 0 0;
  border-top: 1px solid #a8a596;
  box-shadow: inset 0 1px 0 #fff;
  font-size: 11px;
  color: #222;
`

const StatusText = styled.div`
  width: 101px;
`

const StatusClose = styled.div`
  width: 12px;
  height: 13px;
  margin-left: 6px;
  background: linear-gradient(180deg, #6a78c0 0 2px, #f7f2d0 2px);
  font-size: 11px;
  font-weight: 700;
  line-height: 14px;
  text-align: center;
`

const Taskbar = styled.div`
  height: 6px;
  flex: none;
  display: flex;
`

const TaskPart = styled.div`
  width: ${p => p.$w ? `${p.$w}px` : 'auto'};
  flex: ${p => p.$w ? 'none' : 1};
  background: ${p => p.$c};
`

const Annotation = styled.svg`
  position: absolute;
  left: 995px;
  top: 428px;
  width: 130px;
  height: 90px;
  pointer-events: none;
`

const libRows = [
  { pad: 25, guides: [10, 29], exp: 1, minus: 1, gap: 7, label: 'assemblies' },
  { pad: 44, guides: [10, 29], exp: 1, gap: 7, label: 'mold bases' },
  { pad: 25, guides: [10, 29], exp: 1, minus: 1, gap: 7, label: 'features' },
  { pad: 44, guides: [10, 29, 48], exp: 1, minus: 1, gap: 7, label: 'inch' },
  { pad: 79, guides: [10, 29, 48, 67], label: 'fluid power ports' },
  { pad: 79, guides: [10, 29, 48, 67], label: 'hole patterns' },
  { pad: 79, guides: [10, 29, 48, 67], label: 'keyways' },
  { pad: 79, guides: [10, 29, 48, 67], label: 'o-ring grooves' },
  { pad: 79, guides: [10, 29, 48, 67], label: 'retaining ring grooves' },
  { pad: 79, guides: [10, 29, 48, 67], label: 'slots', on: 1 },
  { pad: 44, guides: [10, 29], exp: 1, gap: 7, label: 'metric' },
]

function App() {
  return (
    <Page>
      <GlobalStyle />
      <TitleBar>
        <AppLogo viewBox="0 0 16 17">
          <rect x=".5" y=".5" width="15" height="16" rx="2" fill="#c8281e" stroke="#7a1410" />
          <text x="1.500" y="12" fontSize="9" fontWeight="700" fontFamily="Liberation Sans" fill="#fff">SW</text>
        </AppLogo>
        <TitleText>SolidWorks Office Premium 2006 - [test.SLDLFP]</TitleText>
        <WinBtn>
          <Svg viewBox="0 0 16 16"><path d="M3 12h7v2H3z" fill="#fff" /></Svg>
        </WinBtn>
        <WinBtn>
          <Svg viewBox="0 0 16 16"><path d="M6 3h7v6h-3M3 6h7v7H3z" fill="none" stroke="#fff" strokeWidth="1.300" /></Svg>
        </WinBtn>
        <WinBtn $red>
          <Svg viewBox="0 0 16 16"><path d="M3 3l10 10M13 3L3 13" stroke="#fff" strokeWidth="2.200" /></Svg>
        </WinBtn>
      </TitleBar>

      <MenuBar>
        <MenuLogo><Glyph name="logo" size={19} /></MenuLogo>
        <MenuItem $gap={12}><u>D</u>atei</MenuItem>
        <MenuItem $gap={11}><u>B</u>earbeiten</MenuItem>
        <MenuItem $gap={12}><u>A</u>nsicht</MenuItem>
        <MenuItem $gap={11}><u>E</u>infügen</MenuItem>
        <MenuItem $gap={12}>E<u>x</u>tras</MenuItem>
        <MenuItem $gap={11}><u>3</u>Dcontrol</MenuItem>
        <MenuItem $gap={12}><u>C</u>OSMOSWorks</MenuItem>
        <MenuItem $gap={12}><u>T</u>oolbox</MenuItem>
        <MenuItem $gap={12}><u>F</u>enster</MenuItem>
        <MenuItem $gap={0}><u>H</u>ilfe</MenuItem>
        <MdiBtns>
          <MdiBtn>_</MdiBtn>
          <MdiBtn>❐</MdiBtn>
          <MdiBtn>×</MdiBtn>
        </MdiBtns>
      </MenuBar>

      <ToolRow $h={32}><ToolItems items={row1} /></ToolRow>
      <ToolRow $h={30}>
        <ToolItems items={row2} />
        <RowEnd />
      </ToolRow>

      <Body>
        <Strips>
          <Strip $w={43} $pad={2}>
            <StripGrip />
            <StripItems items={strip1} />
          </Strip>
          <Strip $w={44} $pad={3}>
            <StripGrip />
            <StripItems items={strip2} />
          </Strip>
        </Strips>

        <TreeDock>
          <TabStrip>
            <PanelTab $w={27} $on><Glyph name="featTab" /></PanelTab>
            <PanelTab $w={25}><Glyph name="propTab" /></PanelTab>
            <PanelTab $w={24}><Glyph name="confTab" /></PanelTab>
            <PanelTab $w={24}><Glyph name="dimTab" /></PanelTab>
            <MoreBtn>»</MoreBtn>
          </TabStrip>
          <FeatureTree>
            <TreeList>
              <FeatureRow>
                <RootIcon><Glyph name="bars" /></RootIcon>
                <Selected>test&nbsp; (Standard)</Selected>
              </FeatureRow>
              {features.map(([icon, label, exp]) => (
                <FeatureRow key={label}>
                  <Expander $none={!exp} />
                  <FeatureIcon><Glyph name={icon} /></FeatureIcon>
                  {label}
                </FeatureRow>
              ))}
            </TreeList>
          </FeatureTree>
        </TreeDock>

        <Graphics>
          <ViewRow>
            <Canvas>
              <Part $x={141} $y={350} $w={519} $h={287} $fill="#fff" />
              <Part $x={264} $y={396} $w={263} $h={30} $fill="#99ccff" />
              <Tip>Linear austragen1</Tip>
              <Marker $x={386} $y={457} width="30" height="40" viewBox="0 0 30 40">
                <path d="M9 2v33M9 35h15" stroke="#1010b0" />
                <path d="M9 2l-2 9h4zM20 35l-5-2v4z" fill="#1010b0" />
                <path d="M5 31l8 8M13 31l-8 8M9 30v10" stroke="#1010b0" />
              </Marker>
              <Marker $x={28} $y={750} width="50" height="52" viewBox="0 0 50 52">
                <path d="M10 12v32" stroke="#2a9a4a" strokeWidth="2.500" />
                <path d="M10 6l-5 9h10z" fill="#1f6a3a" />
                <path d="M14 42h20" stroke="#e03048" strokeWidth="3" />
                <path d="M38 42l-7-4v8z" fill="#c02038" />
                <circle cx="10" cy="42" r="5" fill="#222a9a" />
                <text x="6" y="6" fontSize="10" fontFamily="Liberation Sans" fill="#1f6a3a">Y</text>
                <text x="41" y="46" fontSize="10" fontFamily="Liberation Sans" fill="#e03048">X</text>
              </Marker>
              <ViewTab>
                <ViewTabLabel>Benutzerdefiniert</ViewTabLabel>
                <ViewTabDrop><Caret /></ViewTabDrop>
              </ViewTab>
            </Canvas>
            <VScroll>
              <FaintBtn>⌃</FaintBtn>
              <FaintBtn>⌄</FaintBtn>
            </VScroll>
          </ViewRow>
          <HScroll>
            <HThumb />
            <FaintBtn>‹</FaintBtn>
            <HFill />
            <FaintBtn>›</FaintBtn>
          </HScroll>
        </Graphics>

        <SketchStrip>
          <SketchInner>
            <StripGrip />
            <StripItems items={strip3} />
          </SketchInner>
        </SketchStrip>

        <Library>
          <LibTitle>Konstruktionsbibliothek<Pin /></LibTitle>
          <LibTools>
            <Slot><Glyph name="book" size={17} /></Slot>
            <Slot><Glyph name="folderStar" size={17} /></Slot>
            <Slot><Glyph name="sheet" size={17} /></Slot>
            <LibToolSpace $w={0} />
            <Slot><Glyph name="glass" size={18} /></Slot>
            <DropSlot><Caret /></DropSlot>
          </LibTools>
          <TreeBox>
            <LibRows>
              {libRows.map(r => (
                <LibRow key={r.label} $pad={r.pad} $guides={r.guides}>
                  {r.exp && <Expander $minus={r.minus} />}
                  <LibFolder $gap={r.exp ? r.gap : 0}><Glyph name="folderOpen" /></LibFolder>
                  <LibLabel $on={r.on}>{r.label}</LibLabel>
                </LibRow>
              ))}
            </LibRows>
            <VBar>
              <ArrowBtn>⌃</ArrowBtn>
              <VThumb />
              <VGap />
              <ArrowBtn>⌄</ArrowBtn>
            </VBar>
            <HBar>
              <ArrowBtn>‹</ArrowBtn>
              <HBarThumb />
              <ArrowBtn>›</ArrowBtn>
            </HBar>
            <Corner />
          </TreeBox>
          <BandGap />
          <ResultBox>
            <ResultRow>
              <Thumb>
                <ThumbSvg viewBox="0 0 32 32"><path d="M2 12q14 12 28 0l-1 4q-13 9-26 0z" fill="#fff" stroke="#111" /></ThumbSvg>
              </Thumb>
              <ResultLabel>curved slot</ResultLabel>
            </ResultRow>
            <ResultRow>
              <Thumb>
                <ThumbSvg viewBox="0 0 32 32"><rect x="7" y="12" width="18" height="6" rx="2" fill="#fff" stroke="#111" /></ThumbSvg>
              </Thumb>
              <ResultLabel>straight slot</ResultLabel>
            </ResultRow>
            <ResultRow>
              <Thumb $active>
                <ThumbSvg viewBox="0 0 32 32"><path d="M6 9.500h20v2H6zM16 16v1h-1" fill="none" stroke="#222" /></ThumbSvg>
              </Thumb>
              <ResultLabel $on>test</ResultLabel>
            </ResultRow>
          </ResultBox>
        </Library>

        <SideTabs>
          <SideTab $h={25} $mb={0}><Glyph name="home" /></SideTab>
          <SideTab $h={25} $mb={3} $on><Glyph name="book" /></SideTab>
          <SideTab $h={27} $mb={0}><Glyph name="arrows" /></SideTab>
          <SideRail />
        </SideTabs>
      </Body>

      <StatusBar>
        <StatusText>Bearbeiten Teil</StatusText>
        <StatusClose>x</StatusClose>
      </StatusBar>
      <Taskbar>
        <TaskPart $w={95} $c="#45a84a" />
        <TaskPart $w={1002} $c="#2a72e0" />
        <TaskPart $c="#18a0f0" />
      </Taskbar>

      <Annotation viewBox="0 0 130 90">
        <defs>
          <filter id="soft" x="-10%" y="-10%" width="120%" height="120%"><feGaussianBlur stdDeviation="1" /></filter>
        </defs>
        <ellipse cx="65" cy="44.500" rx="53" ry="34.500" transform="rotate(-3 65 44)" fill="none" stroke="#f2641a" strokeWidth="7" filter="url(#soft)" />
      </Annotation>
    </Page>
  )
}

export default App
